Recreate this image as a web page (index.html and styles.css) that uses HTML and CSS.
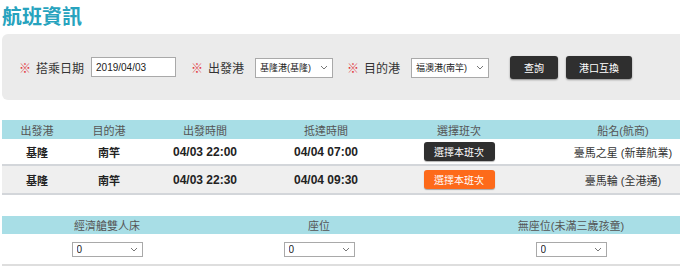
FILE: index.html
```html
<!DOCTYPE html>
<html>
<head>
    <meta charset='utf-8'>
    <title>航班資訊</title>
    <link rel="stylesheet" href="styles.css">
</head>
<body>
    <div class="page">
        <h1 class="title">航班資訊</h1>

        <div class="search-panel">
            <div class="field field-date">
                <span class="mark">※</span>
                <label class="field-label">搭乘日期</label>
                <input class="input-date" type="text" value="2019/04/03">
            </div>
            <div class="field">
                <span class="mark">※</span>
                <label class="field-label">出發港</label>
                <span class="select-wrap port-select">
                    <select><option>基隆港(基隆)</option></select>
                    <svg class="chevron" width="8" height="5" viewBox="0 0 8 5"><path d="M1 1 L4 4 L7 1" fill="none" stroke="#777" stroke-width="1"/></svg>
                </span>
            </div>
            <div class="field">
                <span class="mark">※</span>
                <label class="field-label">目的港</label>
                <span class="select-wrap port-select">
                    <select><option>福澳港(南竿)</option></select>
                    <svg class="chevron" width="8" height="5" viewBox="0 0 8 5"><path d="M1 1 L4 4 L7 1" fill="none" stroke="#777" stroke-width="1"/></svg>
                </span>
            </div>
            <button class="btn-dark btn-query">查詢</button>
            <button class="btn-dark btn-swap">港口互換</button>
        </div>

        <table class="trip-table">
            <colgroup>
                <col style="width:70px"><col style="width:74px"><col style="width:118px">
                <col style="width:124px"><col style="width:142px"><col style="width:186px">
            </colgroup>
            <tr>
                <th>出發港</th><th>目的港</th><th>出發時間</th><th>抵達時間</th><th>選擇班次</th><th>船名(航商)</th>
            </tr>
            <tr>
                <td>基隆</td><td>南竿</td><td class="time">04/03 22:00</td><td class="time">04/04 07:00</td>
                <td><button class="btn-pick">選擇本班次</button></td>
                <td class="ship">臺馬之星 (新華航業)</td>
            </tr>
            <tr class="row-alt">
                <td>基隆</td><td>南竿</td><td class="time">04/03 22:30</td><td class="time">04/04 09:30</td>
                <td><button class="btn-pick btn-picked">選擇本班次</button></td>
                <td class="ship">臺馬輪 (全港通)</td>
            </tr>
        </table>

        <table class="seat-table">
            <colgroup>
                <col style="width:210px"><col style="width:214px"><col style="width:290px">
            </colgroup>
            <tr>
                <th>經濟艙雙人床</th><th>座位</th><th>無座位(未滿三歲孩童)</th>
            </tr>
            <tr>
                <td>
                    <span class="select-wrap count-select">
                        <select><option>0</option></select>
                        <svg class="chevron" width="8" height="5" viewBox="0 0 8 5"><path d="M1 1 L4 4 L7 1" fill="none" stroke="#777" stroke-width="1"/></svg>
                    </span>
                </td>
                <td>
                    <span class="select-wrap count-select">
                        <select><option>0</option></select>
                        <svg class="chevron" width="8" height="5" viewBox="0 0 8 5"><path d="M1 1 L4 4 L7 1" fill="none" stroke="#777" stroke-width="1"/></svg>
                    </span>
                </td>
                <td>
                    <span class="select-wrap count-select">
                        <select><option>0</option></select>
                        <svg class="chevron" width="8" height="5" viewBox="0 0 8 5"><path d="M1 1 L4 4 L7 1" fill="none" stroke="#777" stroke-width="1"/></svg>
                    </span>
                </td>
            </tr>
        </table>
    </div>
</body>
</html>
```

FILE: styles.css
```css
/* reset */
body {
    margin: 0;
    padding: 0;
    overflow: hidden;
    background-color: white;
    color: #222;
    font-family: "Liberation Sans", "Noto Sans CJK TC", sans-serif;
}

/* page */
.page {
    width: 714px;
    padding-left: 2px;
}

.title {
    margin: 0;
    height: 34px;
    line-height: 34px;
    font-size: 20px;
    font-weight: bold;
    color: #27a3be;
}

/* search */
.search-panel {
    height: 66px;
    background-color: #ebebeb;
    border-radius: 6px 0 0 6px;
    display: flex;
    align-items: center;
    padding-left: 17px;
}

.field {
    display: flex;
    align-items: center;
    margin-right: 14px;
}

.mark {
    color: #e2383f;
    font-size: 12px;
    margin-right: 5px;
}

.field-label {
    font-size: 12px;
    color: #333;
    margin-right: 11px;
}

.field-date {
    margin-right: 15px;
}
.field-date .field-label {
    margin-right: 7px;
}

.input-date {
    box-sizing: border-box;
    width: 85px;
    height: 20px;
    border: 1px solid #a9a9a9;
    padding: 0 4px;
    font-family: "Liberation Sans", sans-serif;
    font-size: 10px;
    color: #222;
    background: white;
}

.select-wrap {
    position: relative;
    display: inline-block;
}
.select-wrap select {
    appearance: none;
    box-sizing: border-box;
    border: 1px solid #a9a9a9;
    border-radius: 0;
    background: white;
    color: #222;
    font-family: "Liberation Sans", "Noto Sans CJK TC", sans-serif;
    outline: none;
}
.select-wrap .chevron {
    position: absolute;
    right: 5px;
    top: 50%;
    margin-top: -2px;
}

.port-select select {
    width: 78px;
    height: 20px;
    font-size: 9px;
    padding: 0 4px;
}

.count-select select {
    width: 71px;
    height: 15px;
    font-size: 10px;
    padding: 0 4px;
}

.btn-dark {
    border: none;
    border-radius: 3px;
    background-color: #2f2f2f;
    color: white;
    font-family: "Noto Sans CJK TC", sans-serif;
    font-size: 10px;
    height: 23px;
    box-shadow: 0 1px 2px rgba(0, 0, 0, 0.4);
}
.btn-query {
    width: 48px;
    margin-left: 7px;
}
.btn-swap {
    width: 66px;
    margin-left: 8px;
}

/* trip table */
.trip-table,
.seat-table {
    width: 714px;
    border-collapse: collapse;
    table-layout: fixed;
    font-size: 11px;
}

.trip-table {
    margin-top: 20px;
}

.trip-table th,
.seat-table th {
    background-color: #a8dee6;
    color: #555;
    font-weight: normal;
    padding: 0;
}

.trip-table th {
    height: 19px;
}

.trip-table td {
    height: 25px;
    padding: 0;
    text-align: center;
    font-weight: bold;
    border-bottom: 2px solid #d3d6da;
}

.trip-table .row-alt td {
    height: 27px;
    background-color: #efefef;
}

.trip-table .time {
    font-size: 12px;
}

.trip-table .ship {
    font-weight: normal;
    color: #333;
}

.btn-pick {
    width: 71px;
    height: 19px;
    border: none;
    border-radius: 3px;
    background-color: #2f2f2f;
    color: white;
    font-family: "Noto Sans CJK TC", sans-serif;
    font-size: 10px;
    vertical-align: middle;
    box-shadow: 0 1px 1px rgba(0, 0, 0, 0.3);
}
.btn-picked {
    background-color: #fd6a1a;
}

/* seat table */
.seat-table {
    margin-top: 21px;
}

.seat-table th {
    height: 18px;
}

.seat-table td {
    height: 30px;
    padding: 0;
    text-align: center;
    border-bottom: 2px solid #dedede;
}
```
